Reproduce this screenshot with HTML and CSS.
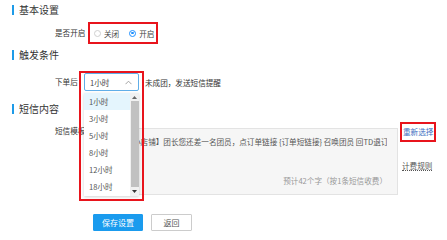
FILE: index.html
```html
<!DOCTYPE html>
<html lang="zh-CN">
<head>
<meta charset="utf-8">
<link rel="stylesheet" href="styles.css">
</head>
<body>
<div class="page">
  <div class="heading h1">基本设置</div>
  <div class="row radio-row">
    <span class="label">是否开启</span>
    <div class="radios">
      <span class="radio"><span class="dot"></span>关闭</span>
      <span class="radio on"><span class="dot"></span>开启</span>
    </div>
  </div>

  <div class="heading h2">触发条件</div>
  <div class="row select-row">
    <span class="label short">下单后</span>
    <div class="select-wrap">
      <div class="select">
        <span>1小时</span>
        <svg class="chev" width="7" height="5" viewBox="0 0 7 5"><path d="M0.5 4.2 L3.5 1.2 L6.5 4.2" fill="none" stroke="#999" stroke-width="0.9"/></svg>
      </div>
      <div class="dropdown">
        <ul class="options">
          <li class="active">1小时</li>
          <li>3小时</li>
          <li>5小时</li>
          <li>8小时</li>
          <li>12小时</li>
          <li>18小时</li>
        </ul>
        <div class="scrollbar">
          <svg class="arr up" width="5" height="3" viewBox="0 0 5 3"><path d="M0 3 L2.5 0 L5 3 Z" fill="#666"/></svg>
          <div class="thumb"></div>
          <svg class="arr down" width="5" height="3" viewBox="0 0 5 3"><path d="M0 0 L2.5 3 L5 0 Z" fill="#333"/></svg>
        </div>
      </div>
      <div class="mark mark-select"></div>
    </div>
    <span class="after">未成团，发送短信提醒</span>
  </div>

  <div class="heading h3">短信内容</div>
  <div class="row tpl-row">
    <span class="label">短信模板</span>
    <div class="tpl">
      <div class="tpl-text">【你的团购小店铺】团长您还差一名团员，点订单链接 {订单短链接} 召唤团员 回TD退订</div>
      <div class="tpl-count">预计42个字（按1条短信收费）</div>
    </div>
    <div class="side">
      <a class="reselect">重新选择</a>
      <a class="rules">计费规则</a>
    </div>
  </div>

  <div class="buttons">
    <button class="btn primary">保存设置</button>
    <button class="btn">返回</button>
  </div>
</div>
</body>
</html>
```
FILE: styles.css
```css
* { box-sizing: border-box; }
html, body { margin: 0; padding: 0; background: #fff; }
body {
  font-family: "Noto Sans CJK SC", "Noto Sans", sans-serif;
  font-size: 7.6px;
  color: #333;
  width: 447px;
  height: 240px;
  overflow: hidden;
}
.page { padding-top: 5px; }

.heading {
  margin-left: 12px;
  border-left: 2px solid #1e9be8;
  padding-left: 5px;
  font-size: 10px;
  line-height: 10px;
  height: 10px;
  color: #333;
}
.h2 { margin-top: 6px; }
.h3 { margin-top: 13px; }

.row {
  display: flex;
  align-items: center;
  padding-left: 55px;
}
.label { width: 33px; flex: none; line-height: 10px; }
.label.short { width: 29px; }

.radio-row { margin-top: 7px; height: 22px; }
.radios {
  display: flex;
  align-items: center;
  gap: 10px;
  height: 22px;
  padding-left: 4px;
  border: 2px solid #e8141c;
  width: 70px;
}
.radio { display: flex; align-items: center; gap: 3px; color: #444; }
.dot {
  width: 7px; height: 7px;
  border: 1px solid #d0d0d0;
  border-radius: 50%;
  background: #fff;
  position: relative;
}
.radio.on .dot { border-color: #1e90ff; }
.radio.on .dot::after {
  content: ""; position: absolute;
  left: 1.2px; top: 1.2px; width: 2.6px; height: 2.6px;
  border-radius: 50%; background: #1e90ff;
}

.select-row { margin-top: 13px; height: 18px; position: relative; z-index: 2; }
.select-wrap { position: relative; width: 55px; height: 18px; }
.select {
  width: 55px; height: 18px;
  border: 1px solid #60aee8;
  border-radius: 2px;
  background: #fff;
  display: flex; align-items: center; justify-content: space-between;
  padding: 0 6px 0 5px;
  color: #444;
}
.chev { display: block; }
.after { margin-left: 6px; }

.dropdown {
  position: absolute;
  left: 0; top: 20px;
  width: 55px; height: 103px;
  background: #fff;
  box-shadow: 0 1px 3px rgba(0,0,0,0.18);
  display: flex;
}
.options { list-style: none; margin: 0; padding: 0; flex: 1; }
.options li {
  height: 17px; line-height: 17px;
  padding-left: 5px;
  color: #555;
}
.options li.active { background: #e4f5fd; }
.scrollbar {
  width: 9px; flex: none;
  background: #f1f1f1;
  display: flex; flex-direction: column; align-items: center;
}
.arr { display: block; margin: 3px 0 2px; }
.arr.down { margin: 3px 0 3px; }
.thumb { width: 8px; flex: 1; background: #c1c1c1; }

.mark {
  position: absolute;
  border: 2px solid #e8141c;
  pointer-events: none;
}
.mark-select { left: -5px; top: -2px; width: 65px; height: 130px; }

.tpl-row { margin-top: 14px; align-items: flex-start; height: 67px; }
.tpl-row .label { margin-top: -2px; line-height: 10px; }
.tpl {
  width: 310px; height: 67px;
  background: #f6f6f6;
  border: 1px solid #e3e3e3;
  padding: 8px 10px 0 6px;
  display: flex; flex-direction: column;
  color: #555;
}
.tpl-text { white-space: nowrap; overflow: hidden; line-height: 10px; }
.tpl-count { margin-top: auto; margin-bottom: 8px; text-align: right; color: #999; line-height: 10px; }
.side { display: flex; flex-direction: column; align-items: flex-start; margin-left: 2px; margin-top: -6px; }
.reselect {
  color: #3e6fc2;
  border: 2px solid #e8141c;
  padding: 3px 1px;
  line-height: 10px;
}
.rules {
  margin-top: 19px; margin-left: 2px;
  color: #555;
  line-height: 9px;
  border-bottom: 1px dotted #555;
}

.buttons { margin-top: 19px; padding-left: 93px; display: flex; gap: 8px; }
.btn {
  font-family: inherit;
  font-size: 8px;
  height: 17px;
  padding: 0;
  border: 1px solid #ccc;
  border-radius: 1px;
  background: #fff;
  color: #555;
  width: 41px;
  line-height: 15px;
}
.btn.primary { width: 50px; background: #1a9bee; border-color: #1a9bee; color: #fff; }
```
